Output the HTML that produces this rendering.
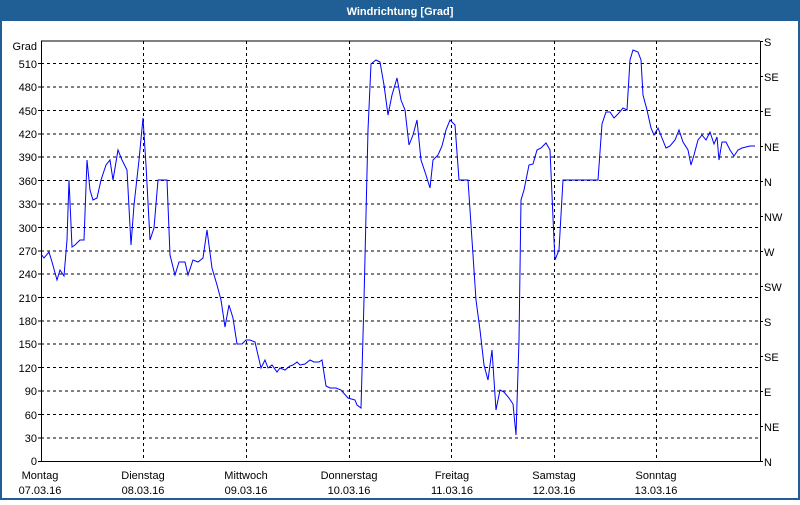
<!DOCTYPE html>
<html><head><meta charset="utf-8"><style>
body{margin:0;width:800px;height:500px;overflow:hidden;background:#fff;font-family:"Liberation Sans",sans-serif}
</style></head><body>
<svg width="800" height="500" xmlns="http://www.w3.org/2000/svg" font-family="Liberation Sans, sans-serif" font-size="11">
<rect x="0" y="0" width="800" height="500" fill="#fff"/>
<rect x="0" y="0" width="800" height="21" fill="#1f5f96"/>
<rect x="0" y="0" width="2" height="500" fill="#1f5f96"/>
<rect x="798" y="0" width="2" height="500" fill="#1f5f96"/>
<rect x="0" y="498" width="800" height="2" fill="#1f5f96"/>
<text x="400" y="15" fill="#fff" font-weight="bold" text-anchor="middle" font-size="11">Windrichtung [Grad]</text>
<g stroke="#000" stroke-width="1" stroke-dasharray="3,3" fill="none">
<path d="M41 63.5H760M41 87H760M41 110.5H760M41 134H760M41 157H760M41 180.5H760M41 204H760M41 227.5H760M41 251H760M41 274H760M41 297.5H760M41 321H760M41 344H760M41 367.5H760M41 391H760M41 414.5H760M41 438H760"/>
<path d="M143.5 41V461M246.5 41V461M349.5 41V461M451.5 41V461M554.5 41V461M656.5 41V461"/>
</g>
<g stroke="#000" stroke-width="1" fill="none">
<path d="M41 41H760M41.5 41V461.5M760.5 41V461.5M38 461.5H760"/>
<path d="M760 41.5h3M760 76.5h3M760 111.5h3M760 146.5h3M760 181.5h3M760 216.5h3M760 251.5h3M760 286.5h3M760 321.5h3M760 356.5h3M760 391.5h3M760 426.5h3M760 461.5h3"/>
<path d="M38 63.5h3M38 87h3M38 110.5h3M38 134h3M38 157h3M38 180.5h3M38 204h3M38 227.5h3M38 251h3M38 274h3M38 297.5h3M38 321h3M38 344h3M38 367.5h3M38 391h3M38 414.5h3M38 438h3"/>
</g>
<g text-anchor="end" fill="#000">
<text x="37" y="50">Grad</text>
<text x="37" y="68">510</text><text x="37" y="91">480</text><text x="37" y="115">450</text><text x="37" y="138">420</text><text x="37" y="161">390</text><text x="37" y="185">360</text><text x="37" y="208">330</text><text x="37" y="232">300</text><text x="37" y="255">270</text><text x="37" y="278">240</text><text x="37" y="302">210</text><text x="37" y="325">180</text><text x="37" y="348">150</text><text x="37" y="372">120</text><text x="37" y="395">90</text><text x="37" y="419">60</text><text x="37" y="442">30</text><text x="37" y="465">0</text>
</g>
<g fill="#000">
<text x="764" y="46">S</text><text x="764" y="81">SE</text><text x="764" y="116">E</text><text x="764" y="151">NE</text><text x="764" y="186">N</text><text x="764" y="221">NW</text><text x="764" y="256">W</text><text x="764" y="291">SW</text><text x="764" y="326">S</text><text x="764" y="361">SE</text><text x="764" y="396">E</text><text x="764" y="431">NE</text><text x="764" y="466">N</text>
</g>
<g fill="#000" text-anchor="middle">
<text x="40" y="479">Montag</text><text x="40" y="494">07.03.16</text>
<text x="143" y="479">Dienstag</text><text x="143" y="494">08.03.16</text>
<text x="246" y="479">Mittwoch</text><text x="246" y="494">09.03.16</text>
<text x="349" y="479">Donnerstag</text><text x="349" y="494">10.03.16</text>
<text x="452" y="479">Freitag</text><text x="452" y="494">11.03.16</text>
<text x="554" y="479">Samstag</text><text x="554" y="494">12.03.16</text>
<text x="656" y="479">Sonntag</text><text x="656" y="494">13.03.16</text>
</g>
<polyline fill="none" stroke="#0000ff" stroke-width="1" points="41,254 44,258 49,252 52,262 57,280 60,270 64,276 67,240 69,180 72,247 75,245 80,240 84,240 87,160 90,190 93,200 97,198 101,180 106,165 110,160 113,180 118,150 122,160 127,170 131,245 134,205 139,160 143,118 146,165 150,240 154,228 158,180 163,180 167,180 170,255 175,275 179,262 185,262 188,275 193,260 198,262 203,258 207,230 212,268 217,285 221,300 225,327 229,305 233,318 237,344 242,344 246,340 250,340 255,342 261,368 265,360 268,368 272,365 277,372 280,368 285,370 290,366 293,365 297,362 300,365 305,364 310,360 314,362 319,362 322,360 326,386 330,388 336,388 341,390 348,398 355,400 357,405 361,408 364,300 368,130 371,64 376,60 380,62 384,85 388,115 392,95 397,78 401,100 405,110 409,145 413,135 417,120 421,160 426,175 430,188 433,160 438,155 442,146 446,130 450,120 455,125 459,180 464,180 468,180 472,240 476,300 480,330 484,365 488,380 492,350 496,410 500,390 504,392 509,398 513,404 516,435 519,340 521,200 524,190 529,165 533,164 537,150 541,148 546,143 550,150 554,240 555,260 559,250 563,180 567,180 575,180 585,180 598,180 602,124 606,112 610,112 614,118 618,114 623,108 627,110 630,60 633,50 638,52 641,60 643,95 647,110 651,128 654,135 658,128 662,138 666,148 670,146 675,140 679,130 683,142 688,150 691,165 694,155 698,140 702,135 706,140 710,132 714,144 717,137 719,160 722,142 726,142 730,150 734,156 738,150 742,148 746,147 750,146 755,146"/>
</svg>
</body></html>
